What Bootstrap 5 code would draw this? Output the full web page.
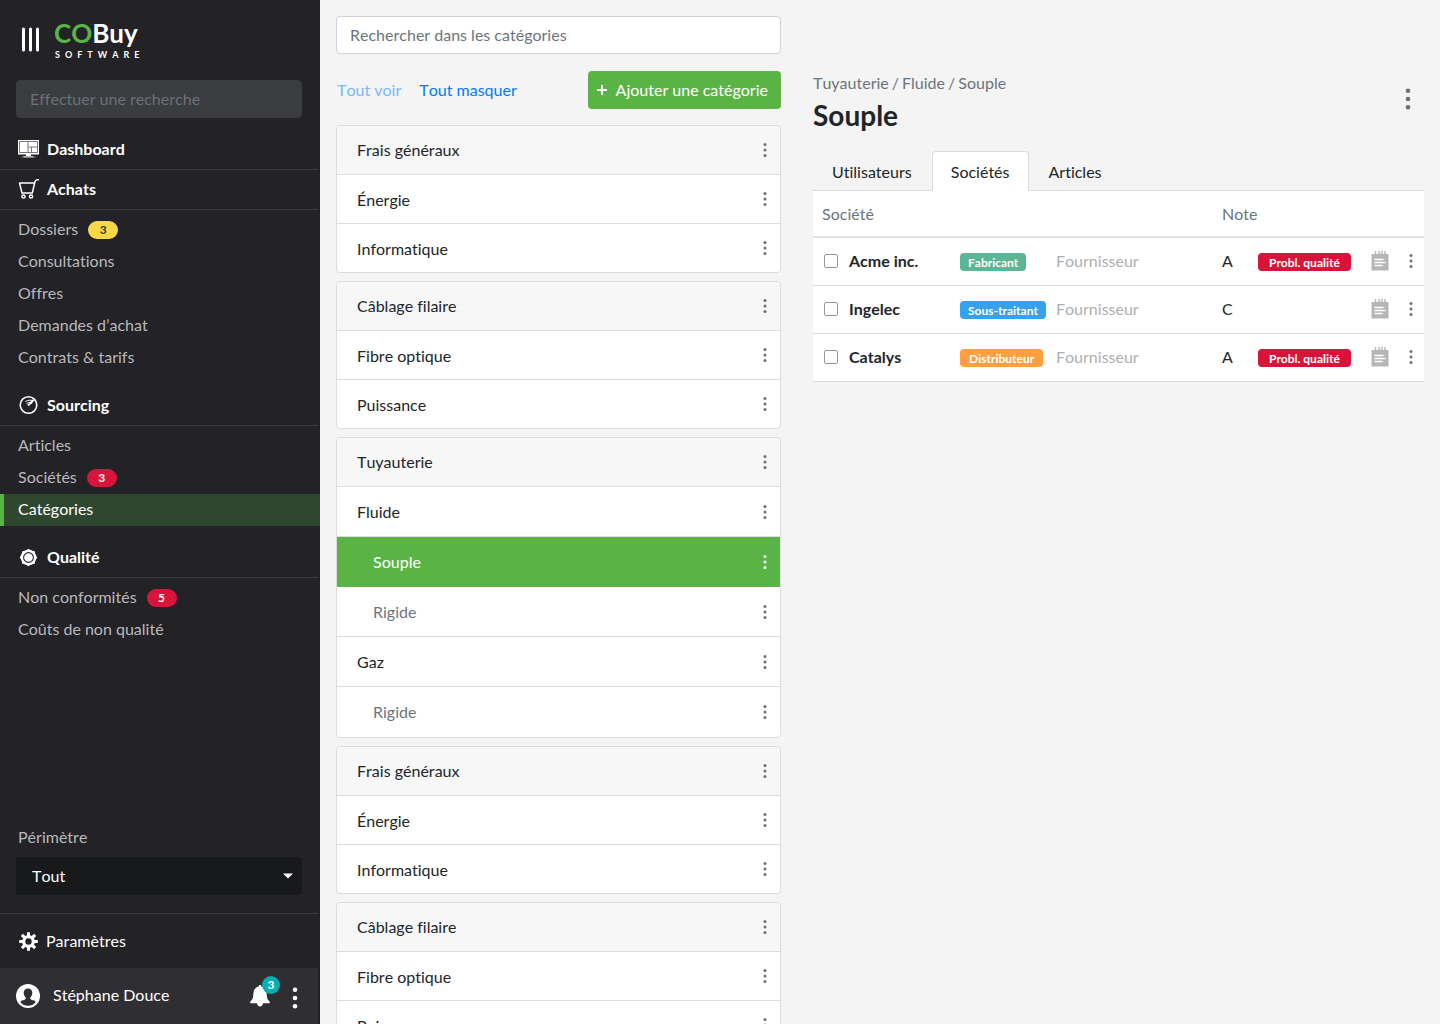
<!DOCTYPE html>
<html lang="fr">
<head>
<meta charset="utf-8">
<meta name="viewport" content="width=device-width, initial-scale=1">
<title>COBuy Software – Catégories</title>
<link href="https://cdn.jsdelivr.net/npm/bootstrap@5.3.0/dist/css/bootstrap.min.css" rel="stylesheet">
<style>
  :root { --brand: #5ab445; --line: #dcdcdd; --ink: #212529; --muted: #6c757d; --danger: #d9143a; }
  * { font-kerning: none; font-variant-ligatures: none; }
  body { font-family: Lato, "Open Sans", sans-serif; font-size: 16px; line-height: 24px; color: var(--ink); background: #f4f4f4; }
  a { text-decoration: none; }
  svg { display: block; flex: none; }
  .scroller { overflow-y: auto; scrollbar-width: none; }
  .scroller::-webkit-scrollbar { display: none; }
  .icon-btn { background: none; border: 0; padding: 0; color: #6f6f6f; display: flex; align-items: center; justify-content: center; }

  /* Sidebar */
  .sidebar { flex: 0 0 320px; background: #232227; color: #fff; }
  .sidebar a { color: #fff; }
  .brand-bar { padding: 19px 16px 17px 22px; gap: 15px; }
  .brand-name { font-size: 26px; line-height: 28px; font-weight: 700; }
  .brand-name span { color: var(--brand); }
  .brand-sub { font-size: 9px; line-height: 16px; font-weight: 700; letter-spacing: 5px; padding-left: 1px; }
  .search-dark { margin: 0 18px 12px 16px; }
  .search-dark .form-control { background: #3b3c40; border-color: #3b3c40; color: #fff; }
  .search-dark .form-control::placeholder { color: #6a7178; }
  .search-dark .form-control, .search-cat .form-control { height: 38px; padding: 5px 13px 7px; border-radius: 4px; }
  .side-head { height: 40px; margin-right: 2px; padding: 0 18px 1px; gap: 8px; border-bottom: 1px solid #3d3c41; font-weight: 700; }
  .side-list { list-style: none; margin: 0 0 12px; padding: 4px 0 0; }
  .side-list a { display: flex; align-items: center; gap: 10px; height: 32px; padding: 0 14px 2px; border-left: 4px solid transparent; color: #b9b9bb; }
  .side-list a.active { background: #2f472f; border-color: var(--brand); color: #fff; }
  .count { width: 30px; height: 18px; border-radius: 9px; background: var(--danger); color: #fff; font-size: 12px; line-height: 18px; font-weight: 700; text-align: center; margin-top: 2px; }
  .count-warn { background: #f8d846; color: #343a40; }
  .scope { margin: 0 18px 18px 16px; }
  .scope label { color: #b9b9bb; padding-left: 2px; margin-bottom: 8px; }
  .scope .form-select { height: 38px; padding: 6px 16px; border: 0; border-radius: 4px; color: #fff; background-color: #18191b;
    background-image: url("data:image/svg+xml,%3Csvg xmlns='http://www.w3.org/2000/svg' viewBox='0 0 10 6'%3E%3Cpath d='M0 .5h10L5 5.5z' fill='%23fff'/%3E%3C/svg%3E");
    background-size: 10px 6px; background-position: right 9px center; }
  .settings { height: 55px; margin-right: 2px; padding: 0 18px; gap: 7px; border-top: 1px solid #3d3c41; }
  .user-bar { height: 56px; margin-right: 2px; padding: 0 20px 0 16px; gap: 13px; background: #2f2e33; }
  .user-bar .name { padding-bottom: 2px; }
  .user-bar .more { padding-top: 4px; margin-left: 9px; }
  .bell { color: #fff; }
  .bell .bell-count { top: -9px; left: 12px; width: 18px; height: 18px; border-radius: 50%; background: #0badb1; font-size: 12px; line-height: 18px; font-weight: 700; }

  /* Categories */
  .cat-col { flex: 0 0 477px; padding: 16px; }
  .search-cat .form-control { border-color: #ced4da; }
  .search-cat .form-control::placeholder { color: var(--muted); }
  .cat-tools { margin: 17px 0 16px; gap: 18px; padding-left: 1px; }
  .cat-tools .link-btn { background: none; border: 0; padding: 0; color: #007bff; }
  .cat-tools .link-btn:disabled { color: #79b9fc; }
  .btn-add { background: var(--brand); color: #fff; height: 38px; padding: 0 13px 0 8px; border: 0; border-radius: 4px; gap: 8px; }
  .tree { margin: 0 0 8px; padding: 0; list-style: none; background: #fff; border: 1px solid var(--line); border-radius: 4px; }
  .tree li { display: flex; align-items: center; justify-content: space-between; height: 49px; padding: 0 10px 0 20px; border-bottom: 1px solid var(--line); }
  .tree li span { padding-top: 1px; }
  .tree li.tree-top { background: #f7f7f7; border-radius: 4px 4px 0 0; }
  .tree li.tree-top span, .tree-deep li span { padding-top: 0; }
  .tree li:last-child { border-bottom: 0; height: 48px; }
  .tree-deep li:not(.tree-top), .tree-deep li:last-child { height: 50px; }
  .tree li.tree-sub { padding-left: 36px; color: var(--muted); }
  .tree li.tree-sub.active { background: var(--brand); color: #fff; border-color: var(--brand); }
  .tree .icon-btn { width: 10px; height: 24px; }
  .tree .active .icon-btn { color: #fff; }

  /* Detail */
  .detail { padding: 71px 16px 16px; min-width: 0; }
  .crumbs { gap: 3px; }
  .crumbs, .crumbs a { color: var(--muted); }
  .detail h1 { font-size: 28px; line-height: 36px; font-weight: 700; margin: 2px 0 18px; }
  .detail-more { padding: 17px 13px 0; }
  .detail .nav-tabs { border-color: var(--line); gap: 1px; }
  .detail .nav-link { color: var(--ink); padding: 8px 18px 6px; line-height: 24px; border-radius: 4px 4px 0 0; margin-bottom: -1px; }
  .detail .nav-link.active { background: #fff; border-color: var(--line) var(--line) #fff; color: var(--ink); }
  .firms { width: 100%; table-layout: fixed; background: #fff; }
  .firms th, .firms td { padding: 0; vertical-align: middle; font-weight: 400; border: 0 solid var(--line); }
  .firms thead th { height: 46px; border-bottom: 2px solid #dee2e6; color: var(--muted); }
  .firms thead th:first-child { padding-left: 9px; }
  .firms tbody tr > * { height: 48px; border-bottom-width: 1px; }
  .firms tbody th { padding-left: 11px; }
  .firms label { font-weight: 700; }
  .firms .form-check-input { width: 14px; height: 14px; margin: 0 11px 0 0; border: 1px solid #939598; border-radius: 2px; }
  .w-firm { width: 147px; } .w-kind { width: 96px; } .w-note { width: 36px; } .w-flag { width: 113px; } .w-memo { width: 35px; } .w-more { width: 18px; }
  .pill { display: block; width: fit-content; height: 18px; border-radius: 4px; padding: 0 8px; color: #fff; font-size: 12px; line-height: 19px; font-weight: 700; margin-top: 1px; white-space: nowrap; }
  .pill-green { background: #5cb696; } .pill-blue { background: #38a1ec; } .pill-orange { background: #ff9f40; padding: 0 9px; } .pill-red { background: var(--danger); padding: 0 11px; }
  .role { color: #acafb2; }
</style>
</head>
<body>
<svg width="0" height="0" class="position-absolute" aria-hidden="true">
  <symbol id="dots" viewBox="0 0 4 14"><circle cx="2" cy="1.5" r="1.5"/><circle cx="2" cy="7" r="1.5"/><circle cx="2" cy="12.5" r="1.5"/></symbol>
  <symbol id="dots-lg" viewBox="0 0 6 22"><circle cx="3" cy="2.7" r="2.3"/><circle cx="3" cy="11" r="2.3"/><circle cx="3" cy="19.3" r="2.3"/></symbol>
  <symbol id="memo" viewBox="0 0 18 20"><path fill="#b4b6b8" d="M.5 3h17v16.500H.5z"/><path stroke="#b4b6b8" stroke-width="1.500" d="M4.500 0v4M8 0v4M11 0v4M14 0v4"/><path stroke="#fff" stroke-width="1.600" d="M3.500 8.500h9M3.500 11.500h11M3.500 14.500h8"/></symbol>
</svg>

<div class="d-flex vh-100 overflow-hidden">
  <nav class="sidebar d-flex flex-column scroller" aria-label="Navigation principale">
    <div class="brand-bar d-flex align-items-start">
      <button class="icon-btn text-white pt-1 mt-1" type="button" aria-label="Menu">
        <svg width="17" height="26" viewBox="0 0 17 26" stroke="#fff" stroke-width="3" stroke-linecap="round"><path d="M1.500 2v21M8.500 2v21M15.500 2v21"/></svg>
      </button>
      <a href="#">
        <div class="brand-name"><span>CO</span>Buy</div>
        <div class="brand-sub">SOFTWARE</div>
      </a>
    </div>
    <form class="search-dark"><input class="form-control" type="search" placeholder="Effectuer une recherche" aria-label="Effectuer une recherche"></form>

    <a class="side-head d-flex align-items-center" href="#">
      <svg width="21" height="18" viewBox="0 0 21 18"><path fill="#fff" d="M0 0h21v14.500H13V16h2.500v1.500h-10V16H8v-1.500H0z"/><path fill="none" stroke="#77767a" d="M1.500 1.500h18v11h-18z"/><path stroke="#77767a" fill="none" d="M10 2v10.500M10 7h9M13.500 7v5"/><path stroke="#77767a" d="M3 17h15"/></svg>
      Dashboard
    </a>
    <a class="side-head d-flex align-items-center" href="#">
      <svg width="21" height="20" viewBox="0 0 21 20" fill="none" stroke="#fff" stroke-width="1.500" stroke-linejoin="round"><path d="M21 .8h-1.500c-1.500 0-2.200.8-2.600 2L14.300 14H4L1.500 4h15"/><circle cx="5.500" cy="17.500" r="1.600"/><circle cx="13" cy="17.500" r="1.600"/></svg>
      Achats
    </a>
    <ul class="side-list">
      <li><a href="#">Dossiers <span class="count count-warn">3</span></a></li>
      <li><a href="#">Consultations</a></li>
      <li><a href="#">Offres</a></li>
      <li><a href="#">Demandes d’achat</a></li>
      <li><a href="#">Contrats &amp; tarifs</a></li>
    </ul>
    <a class="side-head d-flex align-items-center" href="#">
      <svg width="21" height="20" viewBox="0 0 21 20" fill="none" stroke="#fff"><circle cx="10.500" cy="10" r="8.300" stroke-width="1.600"/><path stroke-width="1.800" d="M10 10.500l5.500-5.500"/><path d="M7.500 6.500c2.500-1.500 5-1.500 7.500-1M8.500 8.500c1.500-1 3-1.300 4.500-1M15.500 5l-2.500 4"/></svg>
      Sourcing
    </a>
    <ul class="side-list">
      <li><a href="#">Articles</a></li>
      <li><a href="#">Sociétés <span class="count">3</span></a></li>
      <li><a class="active" href="#" aria-current="page">Catégories</a></li>
    </ul>
    <a class="side-head d-flex align-items-center" href="#">
      <svg width="21" height="20" viewBox="-10.500 -10.500 21 20"><g fill="#fff"><circle r="7.800"/><path d="M-3.800-6L0-8.800 3.800-6v12L0 8.800-3.800 6zM-6-3.800L-8.800 0-6 3.800H6L8.800 0 6-3.800z"/><path transform="rotate(45)" d="M-3.800-6L0-8.800 3.800-6v12L0 8.800-3.800 6zM-6-3.800L-8.800 0-6 3.800H6L8.800 0 6-3.800z"/></g><circle r="4.900" fill="none" stroke="#232227" stroke-width="1.100"/></svg>
      Qualité
    </a>
    <ul class="side-list">
      <li><a href="#">Non conformités <span class="count">5</span></a></li>
      <li><a href="#">Coûts de non qualité</a></li>
    </ul>

    <div class="mt-auto">
      <div class="scope">
        <label class="d-block" for="scope">Périmètre</label>
        <select class="form-select" id="scope"><option>Tout</option></select>
      </div>
      <a class="settings d-flex align-items-center" href="#">
        <svg width="21" height="20" viewBox="-10.500 -10.500 21 20"><g stroke="#fff" stroke-width="3"><path d="M0-9.300V-5M0 5v4.300M-9.300 0H-5M5 0h4.300M-6.600-6.600l3 3M3.600 3.600l3 3M-6.600 6.600l3-3M3.600-3.600l3-3"/></g><circle r="4.800" fill="none" stroke="#fff" stroke-width="3.200"/></svg>
        Paramètres
      </a>
      <div class="user-bar d-flex align-items-center">
        <svg width="24" height="24" viewBox="0 0 24 24"><circle cx="12" cy="12" r="12" fill="#fff"/><path fill="#2f2e33" d="M12 4.500c2.500 0 4.300 1.800 4.300 4.300 0 2-.8 3.600-2 4.600-.3 1.600.2 2 3.700 3.200 1 .4 1.500 1 1.600 1.700A9.800 9.800 0 0 1 12 21.800a9.800 9.800 0 0 1-7.600-3.500c.1-.7.600-1.300 1.600-1.700 3.500-1.200 4-1.600 3.700-3.200-1.200-1-2-2.600-2-4.600 0-2.500 1.800-4.300 4.300-4.300z"/></svg>
        <span class="name flex-grow-1">Stéphane Douce</span>
        <button class="icon-btn bell position-relative" type="button" aria-label="Notifications">
          <svg width="20" height="22" viewBox="0 0 20 22" fill="#fff"><path d="M10 0c1 0 1.400.7 1.400 1.500 3.300.8 5 3.500 5.200 7 .2 4 .7 6 2.800 7.800.8.800.5 2-.6 2H13c-.2 1.800-1.400 3.200-3 3.200s-2.800-1.400-3-3.200H1.200c-1.100 0-1.400-1.200-.6-2 2.100-1.800 2.600-3.800 2.800-7.800.2-3.500 1.900-6.200 5.200-7C8.600.7 9 0 10 0z"/></svg>
          <span class="bell-count position-absolute">3</span>
        </button>
        <button class="icon-btn more text-white" type="button" aria-label="Options du compte"><svg width="6" height="22" fill="#fff"><use href="#dots-lg"/></svg></button>
      </div>
    </div>
  </nav>

  <section class="cat-col scroller" aria-label="Catégories">
    <form class="search-cat"><input class="form-control" type="search" placeholder="Rechercher dans les catégories" aria-label="Rechercher dans les catégories"></form>
    <div class="cat-tools d-flex align-items-center">
      <button class="link-btn" type="button" disabled>Tout voir</button>
      <button class="link-btn" type="button">Tout masquer</button>
      <button class="btn-add btn d-flex align-items-center ms-auto" type="button">
        <svg width="12" height="12" viewBox="0 0 12 12" stroke="#fff" stroke-width="2"><path d="M6 1v10M1 6h10"/></svg>
        Ajouter une catégorie
      </button>
    </div>

    <ul class="tree">
      <li class="tree-top"><span>Frais généraux</span><button class="icon-btn" type="button" aria-label="Options"><svg width="4" height="14" fill="currentColor"><use href="#dots"/></svg></button></li>
      <li><span>Énergie</span><button class="icon-btn" type="button" aria-label="Options"><svg width="4" height="14" fill="currentColor"><use href="#dots"/></svg></button></li>
      <li><span>Informatique</span><button class="icon-btn" type="button" aria-label="Options"><svg width="4" height="14" fill="currentColor"><use href="#dots"/></svg></button></li>
    </ul>
    <ul class="tree">
      <li class="tree-top"><span>Câblage filaire</span><button class="icon-btn" type="button" aria-label="Options"><svg width="4" height="14" fill="currentColor"><use href="#dots"/></svg></button></li>
      <li><span>Fibre optique</span><button class="icon-btn" type="button" aria-label="Options"><svg width="4" height="14" fill="currentColor"><use href="#dots"/></svg></button></li>
      <li><span>Puissance</span><button class="icon-btn" type="button" aria-label="Options"><svg width="4" height="14" fill="currentColor"><use href="#dots"/></svg></button></li>
    </ul>
    <ul class="tree tree-deep">
      <li class="tree-top"><span>Tuyauterie</span><button class="icon-btn" type="button" aria-label="Options"><svg width="4" height="14" fill="currentColor"><use href="#dots"/></svg></button></li>
      <li><span>Fluide</span><button class="icon-btn" type="button" aria-label="Options"><svg width="4" height="14" fill="currentColor"><use href="#dots"/></svg></button></li>
      <li class="tree-sub active"><span>Souple</span><button class="icon-btn" type="button" aria-label="Options"><svg width="4" height="14" fill="currentColor"><use href="#dots"/></svg></button></li>
      <li class="tree-sub"><span>Rigide</span><button class="icon-btn" type="button" aria-label="Options"><svg width="4" height="14" fill="currentColor"><use href="#dots"/></svg></button></li>
      <li><span>Gaz</span><button class="icon-btn" type="button" aria-label="Options"><svg width="4" height="14" fill="currentColor"><use href="#dots"/></svg></button></li>
      <li class="tree-sub"><span>Rigide</span><button class="icon-btn" type="button" aria-label="Options"><svg width="4" height="14" fill="currentColor"><use href="#dots"/></svg></button></li>
    </ul>
    <ul class="tree">
      <li class="tree-top"><span>Frais généraux</span><button class="icon-btn" type="button" aria-label="Options"><svg width="4" height="14" fill="currentColor"><use href="#dots"/></svg></button></li>
      <li><span>Énergie</span><button class="icon-btn" type="button" aria-label="Options"><svg width="4" height="14" fill="currentColor"><use href="#dots"/></svg></button></li>
      <li><span>Informatique</span><button class="icon-btn" type="button" aria-label="Options"><svg width="4" height="14" fill="currentColor"><use href="#dots"/></svg></button></li>
    </ul>
    <ul class="tree">
      <li class="tree-top"><span>Câblage filaire</span><button class="icon-btn" type="button" aria-label="Options"><svg width="4" height="14" fill="currentColor"><use href="#dots"/></svg></button></li>
      <li><span>Fibre optique</span><button class="icon-btn" type="button" aria-label="Options"><svg width="4" height="14" fill="currentColor"><use href="#dots"/></svg></button></li>
      <li><span>Puissance</span><button class="icon-btn" type="button" aria-label="Options"><svg width="4" height="14" fill="currentColor"><use href="#dots"/></svg></button></li>
    </ul>
  </section>

  <main class="detail flex-grow-1 scroller">
    <div class="d-flex justify-content-between align-items-start">
      <div>
        <div class="crumbs d-flex"><a href="#">Tuyauterie</a><span>/</span><a href="#">Fluide</a><span>/</span><span>Souple</span></div>
        <h1>Souple</h1>
      </div>
      <button class="icon-btn detail-more" type="button" aria-label="Options de la catégorie"><svg width="6" height="22" fill="currentColor"><use href="#dots-lg"/></svg></button>
    </div>
    <ul class="nav nav-tabs">
      <li class="nav-item"><a class="nav-link" href="#">Utilisateurs</a></li>
      <li class="nav-item"><a class="nav-link active" href="#" aria-current="page">Sociétés</a></li>
      <li class="nav-item"><a class="nav-link" href="#">Articles</a></li>
    </ul>
    <table class="firms">
      <colgroup><col class="w-firm"><col class="w-kind"><col><col class="w-note"><col class="w-flag"><col class="w-memo"><col class="w-more"></colgroup>
      <thead><tr><th scope="col" colspan="3">Société</th><th scope="col" colspan="4">Note</th></tr></thead>
      <tbody>
        <tr>
          <th scope="row"><div class="d-flex align-items-center"><input class="form-check-input" type="checkbox" id="f1"><label for="f1">Acme inc.</label></div></th>
          <td><span class="pill pill-green">Fabricant</span></td><td class="role">Fournisseur</td><td>A</td><td><span class="pill pill-red">Probl. qualité</span></td>
          <td><button class="icon-btn" type="button" aria-label="Notes"><svg width="18" height="20"><use href="#memo"/></svg></button></td>
          <td><button class="icon-btn" type="button" aria-label="Options"><svg width="10" height="14" fill="currentColor"><use href="#dots"/></svg></button></td>
        </tr>
        <tr>
          <th scope="row"><div class="d-flex align-items-center"><input class="form-check-input" type="checkbox" id="f2"><label for="f2">Ingelec</label></div></th>
          <td><span class="pill pill-blue">Sous-traitant</span></td><td class="role">Fournisseur</td><td>C</td><td></td>
          <td><button class="icon-btn" type="button" aria-label="Notes"><svg width="18" height="20"><use href="#memo"/></svg></button></td>
          <td><button class="icon-btn" type="button" aria-label="Options"><svg width="10" height="14" fill="currentColor"><use href="#dots"/></svg></button></td>
        </tr>
        <tr>
          <th scope="row"><div class="d-flex align-items-center"><input class="form-check-input" type="checkbox" id="f3"><label for="f3">Catalys</label></div></th>
          <td><span class="pill pill-orange">Distributeur</span></td><td class="role">Fournisseur</td><td>A</td><td><span class="pill pill-red">Probl. qualité</span></td>
          <td><button class="icon-btn" type="button" aria-label="Notes"><svg width="18" height="20"><use href="#memo"/></svg></button></td>
          <td><button class="icon-btn" type="button" aria-label="Options"><svg width="10" height="14" fill="currentColor"><use href="#dots"/></svg></button></td>
        </tr>
      </tbody>
    </table>
  </main>
</div>
<script src="https://cdn.jsdelivr.net/npm/bootstrap@5.3.0/dist/js/bootstrap.bundle.min.js"></script>
</body>
</html>
